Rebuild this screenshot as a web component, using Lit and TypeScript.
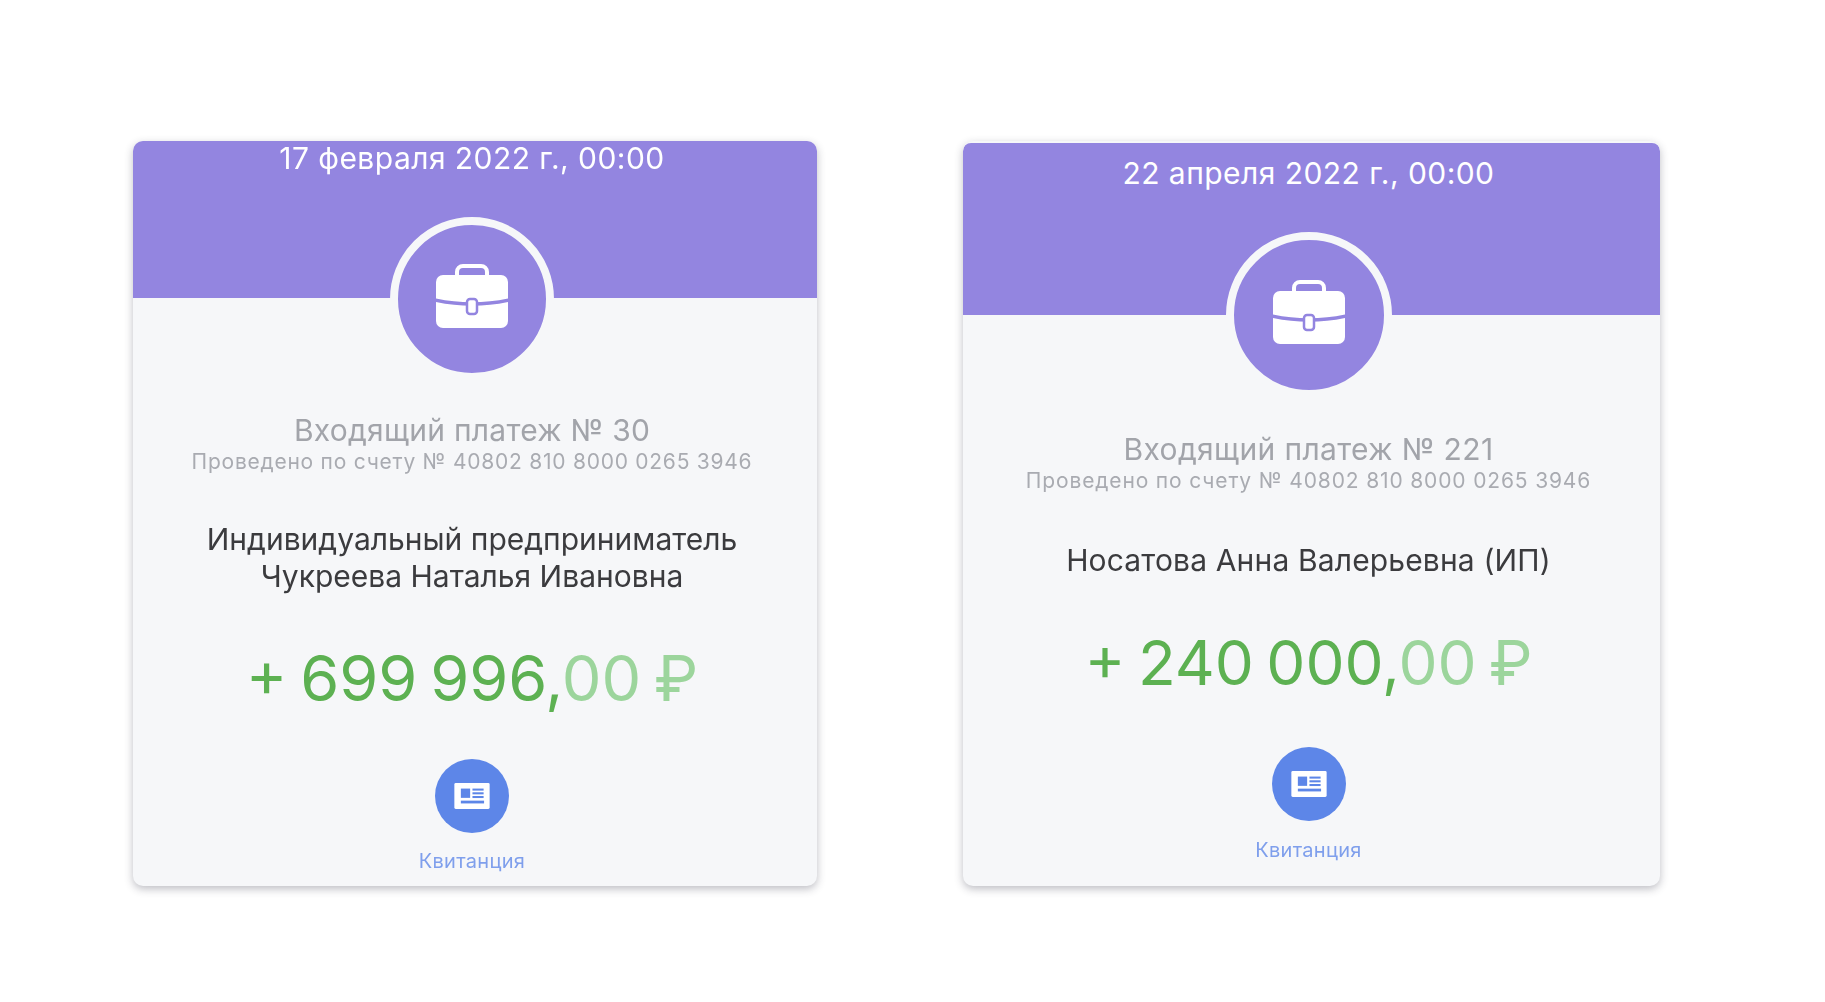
import { LitElement, html, css } from "lit";
import { customElement } from "lit/decorators.js";

const briefcase = html`<svg class="case" viewBox="0 0 72 64" aria-hidden="true">
  <rect x="21" y="2" width="30" height="16" rx="6" fill="none" stroke="#fff" stroke-width="4"/>
  <rect x="0" y="11" width="72" height="53" rx="7" fill="#fff"/>
  <path d="M-1 36 Q36 44 73 36" fill="none" stroke="#9385e0" stroke-width="3.5"/>
  <rect x="31" y="35" width="10" height="15" rx="3" fill="#fff" stroke="#9385e0" stroke-width="2.5"/>
</svg>`;

const doc = html`<svg class="doc" viewBox="0 0 38 28" aria-hidden="true">
  <rect width="38" height="28" rx="1.5" fill="#fff"/>
  <g fill="#5d86e8">
    <rect x="7" y="6" width="10" height="10"/>
    <rect x="19.5" y="6" width="12" height="2.2"/>
    <rect x="19.5" y="10" width="12" height="2.2"/>
    <rect x="19.5" y="14" width="12" height="2.2"/>
    <rect x="7" y="19" width="25" height="3"/>
  </g>
</svg>`;

interface Pay {
  variant: string;
  date: string;
  title: string;
  name: string[];
  plus: string;
}

const PAYS: Pay[] = [
  {
    variant: "first",
    date: "17 февраля 2022 г., 00:00",
    title: "Входящий платеж № 30",
    name: ["Индивидуальный предприниматель", "Чукреева Наталья Ивановна"],
    plus: "699 996,",
  },
  {
    variant: "second",
    date: "22 апреля 2022 г., 00:00",
    title: "Входящий платеж № 221",
    name: ["Носатова Анна Валерьевна (ИП)"],
    plus: "240 000,",
  },
];

@customElement("app-root")
export class AppRoot extends LitElement {
  static styles = css`
    :host {
      display: block;
      height: 1002px;
      background: #fff;
      font-family: Inter, Roboto, sans-serif;
    }
    .page {
      display: flex;
      align-items: flex-start;
      gap: 146px;
      padding: 141px 0 0 132.5px;
    }
    .card {
      box-sizing: border-box;
      height: 745px;
      display: flex;
      flex-direction: column;
      align-items: stretch;
      background: #f6f7f9;
      border-radius: 10px;
      overflow: hidden;
      box-shadow: 0 3px 8px rgba(40, 40, 60, 0.3);
      filter: blur(0.5px);
    }
    .first { width: 684px; }
    .second { width: 697px; padding-top: 2px; }
    .head {
      background: #9385e0;
      color: #fff;
      font-size: 30px;
      line-height: 34px;
      letter-spacing: 0.45px;
      text-align: center;
      padding-right: 5px;
      border-radius: 8px 8px 0 0;
    }
    .first .head { height: 157px; }
    .second .head { height: 172px; padding-top: 13px; box-sizing: border-box; }
    .body {
      display: flex;
      flex-direction: column;
      align-items: center;
      text-align: center;
      padding-right: 5px;
    }
    .badge {
      width: 148px;
      height: 148px;
      margin-top: -81px;
      border: 8px solid #f6f7f9;
      border-radius: 50%;
      background: #9385e0;
      display: flex;
      align-items: center;
      justify-content: center;
    }
    .second .badge { width: 150px; height: 150px; margin-top: -83px; }
    .case { width: 72px; height: 64px; margin-top: -6px; }
    .title {
      margin-top: 31px;
      font-size: 30px;
      line-height: 36px;
      letter-spacing: 0.25px;
      color: #a2a4aa;
    }
    .second .title { margin-top: 33px; letter-spacing: 0.35px; }
    .sub {
      margin-top: 1px;
      font-size: 21px;
      line-height: 26px;
      letter-spacing: 0.75px;
      color: #a9abb1;
    }
    .second .sub { letter-spacing: 0.85px; }
    .name {
      margin-top: 46px;
      font-size: 30px;
      line-height: 37px;
      color: #3b3b3e;
    }
    .second .name { margin-top: 48px; letter-spacing: 0.15px; }
    .sum {
      margin-top: 47px;
      font-size: 63px;
      line-height: 72px;
      word-spacing: -5px;
      color: #5db152;
      white-space: nowrap;
    }
    .second .sum { margin-top: 48px; font-size: 62px; }
    .sum span.light { color: #9cd59c; }
    .btn {
      margin-top: 45px;
      width: 74px;
      height: 74px;
      border-radius: 50%;
      background: #5d86e8;
      display: flex;
      align-items: center;
      justify-content: center;
    }
    .second .btn { margin-top: 48px; }
    .doc { width: 36px; height: 26px; }
    .label {
      margin-top: 16px;
      font-size: 20px;
      line-height: 25px;
      letter-spacing: 0.3px;
      color: #7f9fec;
    }
    .second .label { margin-top: 17px; }
  `;

  render() {
    return html`<div class="page">
      ${PAYS.map(
        (p) => html`<section class="card ${p.variant}">
          <div class="head">${p.date}</div>
          <div class="body">
            <div class="badge">${briefcase}</div>
            <div class="title">${p.title}</div>
            <div class="sub">Проведено по счету № 40802 810 8000 0265 3946</div>
            <div class="name">${p.name.map((n) => html`<div>${n}</div>`)}</div>
            <div class="sum">+ ${p.plus}<span class="light">00 ₽</span></div>
            <div class="btn">${doc}</div>
            <div class="label">Квитанция</div>
          </div>
        </section>`
      )}
    </div>`;
  }
}
